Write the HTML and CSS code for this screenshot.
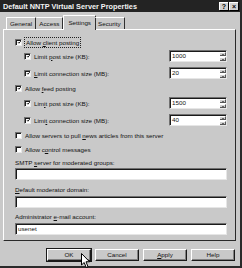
FILE: index.html
```html
<!DOCTYPE html>
<html>

<head>
	<title>Default NNTP Virtual Server Properties</title>
	<link rel="stylesheet" href="styles.css">
</head>

<body>
	<div class="window">
		<div class="titlebar">
			<span class="title">Default NNTP Virtual Server Properties</span>
			<span class="tbtns"><span class="tbtn">?</span><span class="tbtn">×</span></span>
		</div>

		<div class="tabs">
			<span class="tab">General</span>
			<span class="tab">Access</span>
			<span class="tab active">Settings</span>
			<span class="tab">Security</span>
		</div>

		<div class="panel">
			<div class="row">
				<span class="cb on"><svg viewBox="0 0 7 7"><path d="M1.5 3 L3 4.6 L5.8 1.4" /></svg></span>
				<span class="focus">Allow <u>c</u>lient posting</span>
			</div>
			<div class="row sub gap2">
				<span class="cb on"><svg viewBox="0 0 7 7"><path d="M1.5 3 L3 4.6 L5.8 1.4" /></svg></span>
				<span>Limit <u>p</u>ost size (KB):</span>
				<span class="field num">1000<span class="spin"><i class="up"></i><i class="down"></i></span></span>
			</div>
			<div class="row sub gap5">
				<span class="cb on"><svg viewBox="0 0 7 7"><path d="M1.5 3 L3 4.6 L5.8 1.4" /></svg></span>
				<span><u>L</u>imit connection size (MB):</span>
				<span class="field num">20<span class="spin"><i class="up"></i><i class="down"></i></span></span>
			</div>

			<div class="row gap3">
				<span class="cb on"><svg viewBox="0 0 7 7"><path d="M1.5 3 L3 4.6 L5.8 1.4" /></svg></span>
				<span>Allow <u>f</u>eed posting</span>
			</div>
			<div class="row sub gap3">
				<span class="cb on"><svg viewBox="0 0 7 7"><path d="M1.5 3 L3 4.6 L5.8 1.4" /></svg></span>
				<span>Lim<u>i</u>t post size (KB):</span>
				<span class="field num">1500<span class="spin"><i class="up"></i><i class="down"></i></span></span>
			</div>
			<div class="row sub gap5">
				<span class="cb on"><svg viewBox="0 0 7 7"><path d="M1.5 3 L3 4.6 L5.8 1.4" /></svg></span>
				<span>Limi<u>t</u> connection size (MB):</span>
				<span class="field num">40<span class="spin"><i class="up"></i><i class="down"></i></span></span>
			</div>

			<div class="row gap3">
				<span class="cb"></span>
				<span>Allow servers to pull <u>n</u>ews articles from this server</span>
			</div>
			<div class="row gap2">
				<span class="cb"></span>
				<span>Allow c<u>o</u>ntrol messages</span>
			</div>

			<div class="label gap3">SMTP <u>s</u>erver for moderated groups:</div>
			<div class="field wide"></div>

			<div class="label gap5"><u>D</u>efault moderator domain:</div>
			<div class="field wide gap1"></div>

			<div class="label gap4">Administrator <u>e</u>-mail account:</div>
			<div class="field wide gap1">usenet</div>
		</div>

		<div class="buttons">
			<span class="btn default">OK</span>
			<span class="btn">Cancel</span>
			<span class="btn"><u>A</u>pply</span>
			<span class="btn">Help</span>
		</div>

		<svg class="cursor" width="10" height="16" viewBox="0 0 10 16">
			<path d="M0.5 0.5 L0.5 12 L3.2 9.5 L5.2 14.5 L7 13.7 L5 8.8 L8.6 8.8 Z" fill="#fff" stroke="#000" stroke-width="1" />
		</svg>
	</div>
</body>

</html>
```

FILE: styles.css
```css
body {
	margin: 0;
	background-color: #c9c9c9;
	font-family: "Liberation Sans", Arial, sans-serif;
	font-size: 6.25px;
	color: #111;
}

.window {
	position: relative;
	width: 240px;
	height: 266px;
	border-right: 2px solid #2a2a2a;
	border-bottom: 2px solid #2a2a2a;
	display: flex;
	flex-direction: column;
}

.titlebar {
	height: 12px;
	background-color: #232323;
	display: flex;
	align-items: center;
	justify-content: space-between;
	padding: 0 2px 0 3px;
}

.title {
	font-weight: bold;
	font-size: 7.3px;
	color: #f2f2f2;
}

.tbtns {
	display: flex;
	gap: 1px;
}

.tbtn {
	width: 8px;
	height: 7px;
	background-color: #d2d2d2;
	border-top: 1px solid #fff;
	border-left: 1px solid #fff;
	box-shadow: 1px 1px 0 #000;
	font-weight: bold;
	font-size: 7px;
	line-height: 7px;
	text-align: center;
	color: #000;
}

.tabs {
	height: 17px;
	display: flex;
	align-items: flex-end;
	padding-left: 6px;
	position: relative;
	z-index: 1;
}

.tab {
	height: 11px;
	line-height: 11px;
	padding: 0 3px;
	border-top: 1px solid #fff;
	border-left: 1px solid #fff;
	border-right: 1px solid #303030;
	border-top-left-radius: 1px;
	border-top-right-radius: 1px;
}

.tab + .tab {
	border-left: none;
}

.tab.active {
	height: 14px;
	line-height: 13px;
	padding: 0 4px;
	margin: 0 -1px -1px 0;
	border-left: 1px solid #fff;
	background-color: #c9c9c9;
}

.panel {
	margin: 0 4px 0 3px;
	border-top: 1px solid #fff;
	border-left: 1px solid #fff;
	border-right: 1px solid #2a2a2a;
	border-bottom: 1px solid #2a2a2a;
	padding: 6px 8px 4px 11px;
	height: 200px;
	display: flex;
	flex-direction: column;
}

.row {
	height: 12px;
	display: flex;
	align-items: center;
}

.sub {
	padding-left: 9px;
}

.gap1 { margin-top: 1px; }
.gap2 { margin-top: 2px; }
.gap3 { margin-top: 3px; }
.gap4 { margin-top: 4px; }
.gap5 { margin-top: 5px; }

.cb {
	width: 5px;
	height: 5px;
	margin-right: 3px;
	background-color: #fff;
	border-top: 1px solid #707070;
	border-left: 1px solid #707070;
	border-right: 1px solid #e8e8e8;
	border-bottom: 1px solid #e8e8e8;
	box-shadow: inset 1px 1px 0 #1a1a1a;
	display: flex;
}

.cb svg {
	width: 5px;
	height: 5px;
	margin: 0.5px 0 0 0.5px;
}

.cb path {
	fill: none;
	stroke: #000;
	stroke-width: 1.4;
}

.focus {
	outline: 1px dotted #222;
	outline-offset: 0;
	padding: 0 1px;
	line-height: 9px;
}

.label {
	height: 10px;
	line-height: 10px;
}

.field {
	height: 10px;
	line-height: 10px;
	background-color: #fff;
	border-top: 1px solid #707070;
	border-left: 1px solid #707070;
	border-right: 1px solid #e6e6e6;
	border-bottom: 1px solid #e6e6e6;
	box-shadow: inset 1px 1px 0 #1a1a1a;
	padding-left: 2px;
	position: relative;
}

.field.num {
	width: 54px;
	margin-left: auto;
}

.spin {
	position: absolute;
	right: 0;
	top: 1px;
	width: 6px;
	height: 9px;
	display: flex;
	flex-direction: column;
	gap: 1px;
}

.spin i {
	flex: 1;
	background-color: #d0d0d0;
	border-top: 1px solid #fff;
	border-right: 1px solid #555;
	border-bottom: 1px solid #555;
	display: flex;
	align-items: center;
	justify-content: center;
}

.spin i::after {
	content: "";
	border-left: 1.5px solid transparent;
	border-right: 1.5px solid transparent;
}

.spin .up::after {
	border-bottom: 1.5px solid #000;
}

.spin .down::after {
	border-top: 1.5px solid #000;
}

.field.wide {
	height: 10px;
}

.buttons {
	margin-top: 8px;
	padding-right: 5px;
	display: flex;
	justify-content: flex-end;
	gap: 4px;
}

.btn {
	width: 42px;
	height: 10px;
	line-height: 10px;
	text-align: center;
	border-top: 1px solid #fff;
	border-left: 1px solid #fff;
	border-right: 1px solid #1a1a1a;
	border-bottom: 1px solid #1a1a1a;
	box-shadow: inset -1px -1px 0 #808080;
}

.btn.default {
	outline: 1px solid #1a1a1a;
}

.cursor {
	position: absolute;
	left: 81px;
	top: 253px;
}
```
